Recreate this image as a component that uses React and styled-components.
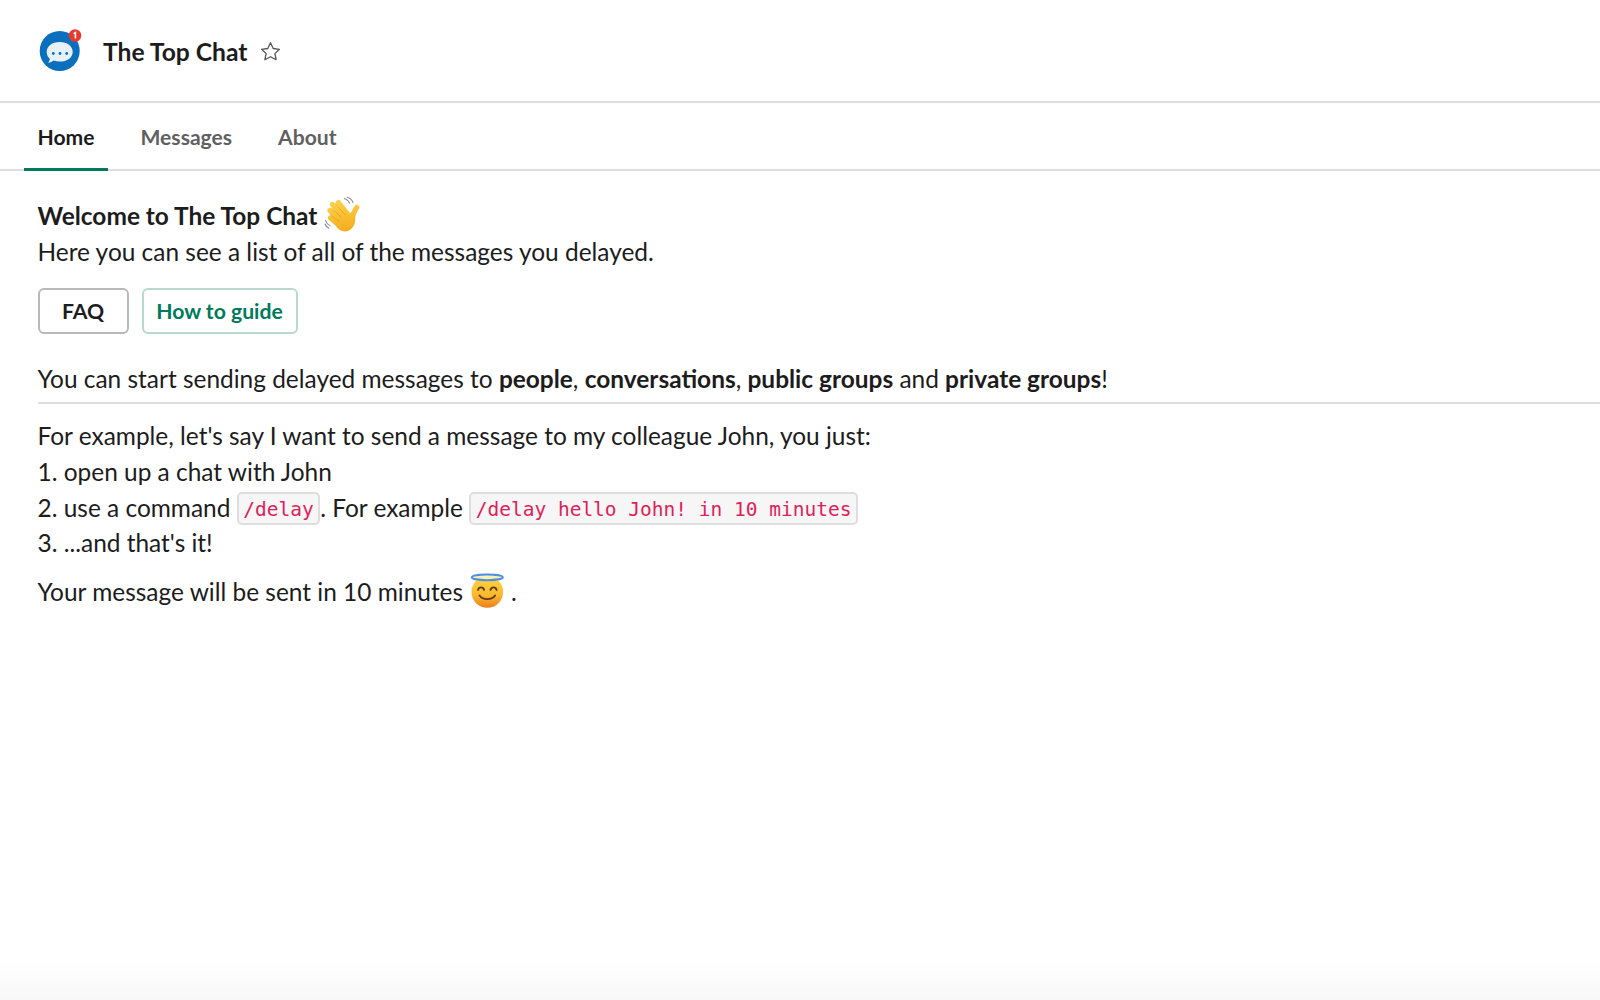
import React from "react";
import styled, { createGlobalStyle } from "styled-components";

const Global = createGlobalStyle`
  html, body { margin: 0; padding: 0; background: #fff; }
  body { font-family: Lato, "Open Sans", sans-serif; color: #1d1c1d; }
`;

const Page = styled.div`
  width: 1600px;
  height: 1000px;
  overflow: hidden;
  background: linear-gradient(to bottom, #fff 0, #fff 960px, #f8f8f8 1000px);
`;
const Header = styled.header`
  display: flex;
  align-items: center;
  height: 101px;
  padding-left: 38px;
  border-bottom: 2px solid #dedede;
`;
const Title = styled.h1`
  margin: 2px 0 0 21px;
  font-size: 24.650px;
  font-weight: 700;
  line-height: 36px;
`;
const StarWrap = styled.span`
  display: flex;
  margin: 2px 0 0 12px;
`;
const Tabs = styled.nav`
  display: flex;
  gap: 19px;
  height: 68px;
  box-sizing: border-box;
  padding-left: 24px;
  border-bottom: 2px solid #dedede;
`;
const Tab = styled.a`
  display: flex;
  align-items: center;
  height: 68px;
  padding: 0 13.500px 2px;
  box-sizing: border-box;
  font-size: 21.100px;
  font-weight: 700;
  color: ${(p) => (p.$active ? "#1d1c1d" : "#616061")};
  box-shadow: ${(p) => (p.$active ? "inset 0 -3px 0 #007a5a" : "none")};
`;
const Content = styled.main`
  padding: 27px 0 0 37.500px;
  font-size: 24.450px;
  line-height: 36px;
`;
const Heading = styled.div`
  display: flex;
  align-items: center;
  font-weight: 700;
  height: 36px;
`;
const Line = styled.div`
  height: 36px;
  margin-top: ${(p) => p.$shift || 0}px;
`;
const Buttons = styled.div`
  display: flex;
  gap: 13px;
  margin: 18px 0 27px;
`;
const Button = styled.button`
  height: 46px;
  width: ${(p) => p.$w}px;
  padding: 0;
  font-family: inherit;
  font-size: 21.200px;
  font-weight: 700;
  color: ${(p) => (p.$green ? "#007a5a" : "#1d1c1d")};
  background: #fff;
  border: 2px solid ${(p) => (p.$green ? "#b9d8cf" : "#b9b9b9")};
  border-radius: 6px;
`;
const Divider = styled.hr`
  margin: 5px 0 14px;
  border: 0;
  border-top: 2px solid #dedede;
`;
const Strong = styled.b`
  font-weight: 700;
`;
const Code = styled.code`
  display: inline-block;
  height: 33px;
  padding: 0 4.500px;
  box-sizing: border-box;
  font-family: "DejaVu Sans Mono", monospace;
  font-size: 19.500px;
  line-height: 32px;
  color: #e01e5a;
  background: #f6f6f6;
  border: 2px solid #dedede;
  border-radius: 5px;
  vertical-align: 1px;
`;
const Last = styled.div`
  display: flex;
  align-items: center;
  margin-top: 13px;
  white-space: pre;
`;

const Logo = () => (
  <svg width="44" height="44" viewBox="0 0 44 44">
    <circle cx="21.700" cy="22" r="20" fill="#0a70bd" />
    <path d="M21.700 13c-7.500 0-13 4-13 10 0 2.900 1.300 5.300 3.200 7-.2 1.400-.8 2.700-1.700 3.700 2.200-.1 4-.9 5.300-2.100 1.900.7 4 1 6.200 1 7.500 0 13-4 13-9.600 0-6-5.500-10-13-10z" fill="#e6f1fa" />
    <circle cx="15.300" cy="24.500" r="1.400" fill="#0a70bd" />
    <circle cx="22" cy="24.500" r="1.400" fill="#0a70bd" />
    <circle cx="28.700" cy="24.500" r="1.400" fill="#0a70bd" />
    <circle cx="37" cy="6.500" r="6.300" fill="#e8392c" />
    <path d="M35.700 4.700l1.700-1.100v6" stroke="#fff" strokeWidth="1.600" fill="none" />
  </svg>
);
const Star = () => (
  <svg width="21" height="21" viewBox="0 0 21 21">
    <path d="M10.500 1.800l2.700 5.700 6.200.8-4.500 4.300 1.200 6.100-5.600-3-5.600 3 1.200-6.100L1.600 8.300l6.200-.8z" fill="none" stroke="#555" strokeWidth="1.300" strokeLinejoin="round" />
  </svg>
);
const Wave = () => (
  <svg width="38" height="38" viewBox="0 0 38 38" style={{ marginLeft: 7, marginTop: -2 }}>
    <defs>
      <linearGradient id="handFill" gradientUnits="userSpaceOnUse" x1="14" y1="2" x2="22" y2="37">
        <stop offset="0" stopColor="#fdd648" />
        <stop offset="1" stopColor="#f6a91e" />
      </linearGradient>
    </defs>
    <g fill="none" stroke="url(#handFill)" strokeWidth="5.200" strokeLinecap="round">
      <path d="M14.500 6.500L25 20" />
      <path d="M8.500 8.500L21 22" />
      <path d="M6 14.500L18 25" />
      <path d="M6.500 22L15 29" />
      <path d="M32.800 11.500C30 15 28.500 19 28 25" />
    </g>
    <path d="M15 20l14-4c2 2 3 6 2 10-1 5-5 9.500-10 9.500-4 0-7-2.500-9-5.500z" fill="url(#handFill)" />
    <g fill="none" stroke="#e2941a" strokeWidth=".7">
      <path d="M11.500 7.500L21 19" />
      <path d="M7.500 12l10 9.500" />
      <path d="M6 18.500l9 7" />
    </g>
    <path d="M20 2.500c2.600.7 4.700 2.500 5.600 5M22.800 1c3 .8 5.300 3 6.300 5.800M1.500 24c.6 2.700 2.300 4.700 5 5.700M.8 27.800c.8 2.200 2.300 3.800 4.500 4.700" fill="none" stroke="#8d8d8d" strokeWidth="1.100" />
  </svg>
);
const Angel = () => (
  <svg width="36" height="36" viewBox="0 0 36 36" style={{ margin: "-2px 5px 0 7px" }}>
    <defs>
      <linearGradient id="faceFill" x1="0" y1="0" x2="0" y2="1">
        <stop offset="0" stopColor="#fed53f" />
        <stop offset="0.600" stopColor="#fbb92e" />
        <stop offset="1" stopColor="#ee7d1e" />
      </linearGradient>
    </defs>
    <circle cx="17.300" cy="19" r="15.800" fill="url(#faceFill)" />
    <ellipse cx="17.300" cy="4.300" rx="15.500" ry="2.900" fill="#fff0b0" stroke="#4d8fe8" strokeWidth="2" />
    <path d="M8 17c.9-3.400 5.200-3.400 6.100 0M20.500 17c.9-3.400 5.200-3.400 6.100 0" fill="none" stroke="#5b3a1a" strokeWidth="1.800" strokeLinecap="round" />
    <path d="M9.500 22.500c3.500 4.800 12.100 4.800 15.600 0" fill="none" stroke="#5b3a1a" strokeWidth="1.900" strokeLinecap="round" />
  </svg>
);

export default function App() {
  return (
    <Page>
      <Global />
      <Header>
        <Logo />
        <Title>The Top Chat</Title>
        <StarWrap><Star /></StarWrap>
      </Header>
      <Tabs>
        <Tab $active>Home</Tab>
        <Tab>Messages</Tab>
        <Tab>About</Tab>
      </Tabs>
      <Content>
        <Heading>Welcome to The Top Chat<Wave /></Heading>
        <Line>Here you can see a list of all of the messages you delayed.</Line>
        <Buttons>
          <Button $w={91}>FAQ</Button>
          <Button $w={156} $green>How to guide</Button>
        </Buttons>
        <Line>
          You can start sending delayed messages to <Strong>people</Strong>, <Strong>conversations</Strong>, <Strong>public groups</Strong> and <Strong>private groups</Strong>!
        </Line>
        <Divider />
        <Line>For example, let's say I want to send a message to my colleague John, you just:</Line>
        <Line>1. open up a chat with John</Line>
        <Line>2. use a command <Code>/delay</Code>. For example <Code>/delay hello John! in 10 minutes</Code></Line>
        <Line $shift={-1}>3. ...and that's it!</Line>
        <Last>Your message will be sent in 10 minutes<Angel />.</Last>
      </Content>
    </Page>
  );
}
